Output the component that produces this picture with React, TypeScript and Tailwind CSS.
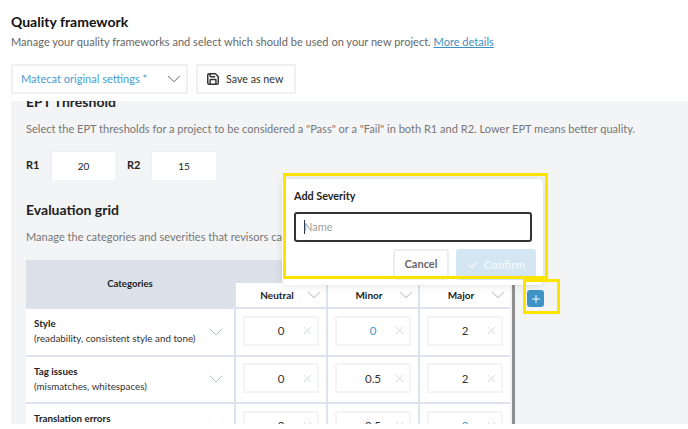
import { ChevronDown, Check, Plus, Save, X } from "lucide-react";

const rows = [
  { title: "Style", sub: "(readability, consistent style and tone)", values: ["0", "0", "2"], blue: 1 },
  { title: "Tag issues", sub: "(mismatches, whitespaces)", values: ["0", "0.5", "2"], blue: -1 },
  { title: "Translation errors", sub: "", values: ["0", "0.5", "2"], blue: 2 },
];

function ValueCell({ value, blue }: { value: string; blue: boolean }) {
  return (
    <div className="w-[92px] pb-[2px] bg-white border-l-2 border-[#dde3ee] flex items-center justify-center">
      <div className="w-[76px] h-[30px] border-2 border-[#f3f4f6] flex items-center">
        <span className={`w-[72px] text-center text-[11.5px] ${blue ? "text-[#3f9bd1]" : "text-[#333]"}`}>{value}</span>
        <X className="-ml-[16px] text-[#c3cbd8]" size={13} strokeWidth={1.25} />
      </div>
    </div>
  );
}

function HeadCell({ label }: { label: string }) {
  return (
    <div className="w-[92px] h-[24px] bg-white border-l-2 border-[#dde3ee] flex items-center justify-center pr-[8px] relative">
      <span className="font-bold text-[10px] text-[#222]">{label}</span>
      <ChevronDown className="absolute right-[1px] text-[#8a93a3]" size={22} strokeWidth={0.8} />
    </div>
  );
}

export default function App() {
  return (
    <div className="relative h-[429px] w-[688px] overflow-hidden bg-white font-['Lato',sans-serif] text-[#222]">
      <div className="px-[11px] pt-[12px]">
        <h1 className="text-[14px] leading-[19px] font-bold text-[#111]">Quality framework</h1>
        <p className="mt-[2px] text-[11.05px] leading-[18px] text-[#666]">
          Manage your quality frameworks and select which should be used on your new project.{" "}
          <a className="text-[#3f8fc4] underline">More details</a>
        </p>
        <div className="mt-[13px] flex gap-[8px]">
          <div className="w-[177px] h-[30px] border-2 border-[#eef0f3] flex items-center justify-between pl-[8px] pr-[1px]">
            <span className="text-[11.05px] text-[#4a9dd4]">Matecat original settings *</span>
            <ChevronDown className="text-[#555]" size={22} strokeWidth={1} />
          </div>
          <div className="w-[100px] h-[30px] border-2 border-[#eef0f3] flex items-center gap-[6px] pl-[8px]">
            <Save className="text-[#333]" size={14} strokeWidth={2.5} />
            <span className="text-[10.7px] text-[#333]">Save as new</span>
          </div>
        </div>
      </div>

      <div className="ml-[11px] mt-[7px] h-[323px] bg-[#f3f4f6] overflow-hidden pl-[15px]">
        <h2 className="-mt-[8px] text-[14px] leading-[18px] font-bold text-[#222]">EPT Threshold</h2>
        <p className="mt-[9px] text-[11.05px] leading-[18px] text-[#777] whitespace-nowrap">
          Select the EPT thresholds for a project to be considered a "Pass" or a "Fail" in both R1 and R2. Lower EPT means better quality.
        </p>
        <div className="mt-[12px] flex items-center">
          <span className="w-[24px] text-[11px] font-bold">R1</span>
          <div className="w-[65px] h-[30px] bg-white border-l-2 border-t-2 border-[#eef0f3] flex items-center justify-center text-[10px]">20</div>
          <span className="ml-[12px] w-[23px] text-[11px] font-bold">R2</span>
          <div className="w-[66px] h-[30px] bg-white border-l-2 border-t-2 border-[#eef0f3] flex items-center justify-center text-[10px]">15</div>
        </div>
        <h2 className="mt-[20px] text-[14px] leading-[19px] font-bold text-[#222]">Evaluation grid</h2>
        <p className="mt-[9px] text-[11.05px] leading-[18px] text-[#777]">
          Manage the categories and severities that revisors can use
        </p>
        <div className="mt-[14px] flex w-[490px] items-start">
          <div className="w-[484px] shrink-0">
            <div className="flex bg-[#dce1e9]">
              <div className="w-[208px] h-[47px] pt-[2px] flex items-center justify-center font-bold text-[9.6px] text-[#222]">Categories</div>
              <div className="flex flex-col justify-end">
                <div className="flex">
                  <HeadCell label="Neutral" />
                  <HeadCell label="Minor" />
                  <HeadCell label="Major" />
                </div>
              </div>
            </div>
            {rows.map((row) => (
              <div key={row.title} className="flex h-[47.5px] border-t-2 border-[#dde3ee]">
                <div className="w-[208px] bg-white flex items-center justify-between pl-[8px] pr-[6px]">
                  <div className="self-start pt-[7px] text-[9.8px] leading-[15px] text-[#333] whitespace-nowrap">
                    <div className="font-bold text-[#222]">{row.title}</div>
                    <div>{row.sub}</div>
                  </div>
                  <ChevronDown className="text-[#a3abb8]" size={24} strokeWidth={0.75} />
                </div>
                {row.values.map((v, i) => (
                  <ValueCell key={i} value={v} blue={i === row.blue} />
                ))}
              </div>
            ))}
          </div>
          <div className="ml-[2px] h-[200px] w-[3px] shrink-0 bg-[#8f8f8f]" />
        </div>
      </div>

      <button className="absolute left-[527px] top-[290px] size-[17px] rounded-[3px] bg-[#3f94c7] flex items-center justify-center">
        <Plus className="text-white" size={12} strokeWidth={2} />
      </button>

      {/* popup */}
      <div className="absolute left-[282px] top-[179px] w-[261px] h-[106px] rounded-[5px] bg-white px-[12px] pt-[9px] shadow-[0_0_8px_rgba(0,0,0,0.12)]">
        <div className="text-[10.8px] leading-[15px] font-bold text-[#222]">Add Severity</div>
        <div className="mt-[9px] h-[30px] w-[238px] rounded-[3px] border-2 border-[#333] flex items-center pl-[8px] text-[11px] text-[#a0a0a0]">
          <span className="mr-[-1px] h-[14px] w-px bg-[#333]" />
          Name
        </div>
        <div className="mt-[7px] flex justify-end gap-[7px] -mr-[5px]">
          <div className="w-[56px] h-[31px] rounded-[3px] border-2 border-[#eceef1] flex items-center justify-center text-[11px] font-bold text-[#666]">Cancel</div>
          <div className="w-[80px] h-[31px] rounded-[3px] bg-[#d3e6f2] flex items-center justify-center gap-[5px] text-[11.5px] font-bold text-[#f0f6fa]">
            <Check size={12} strokeWidth={3} />
            Confirm
          </div>
        </div>
      </div>

      {/* yellow annotations */}
      <div className="absolute left-[283px] top-[173px] w-[265px] h-[106px] border-[3px] border-[#fde400] pointer-events-none" />
      <div className="absolute left-[523px] top-[279px] w-[37px] h-[35px] border-[3px] border-[#fde400] pointer-events-none" />
    </div>
  );
}
